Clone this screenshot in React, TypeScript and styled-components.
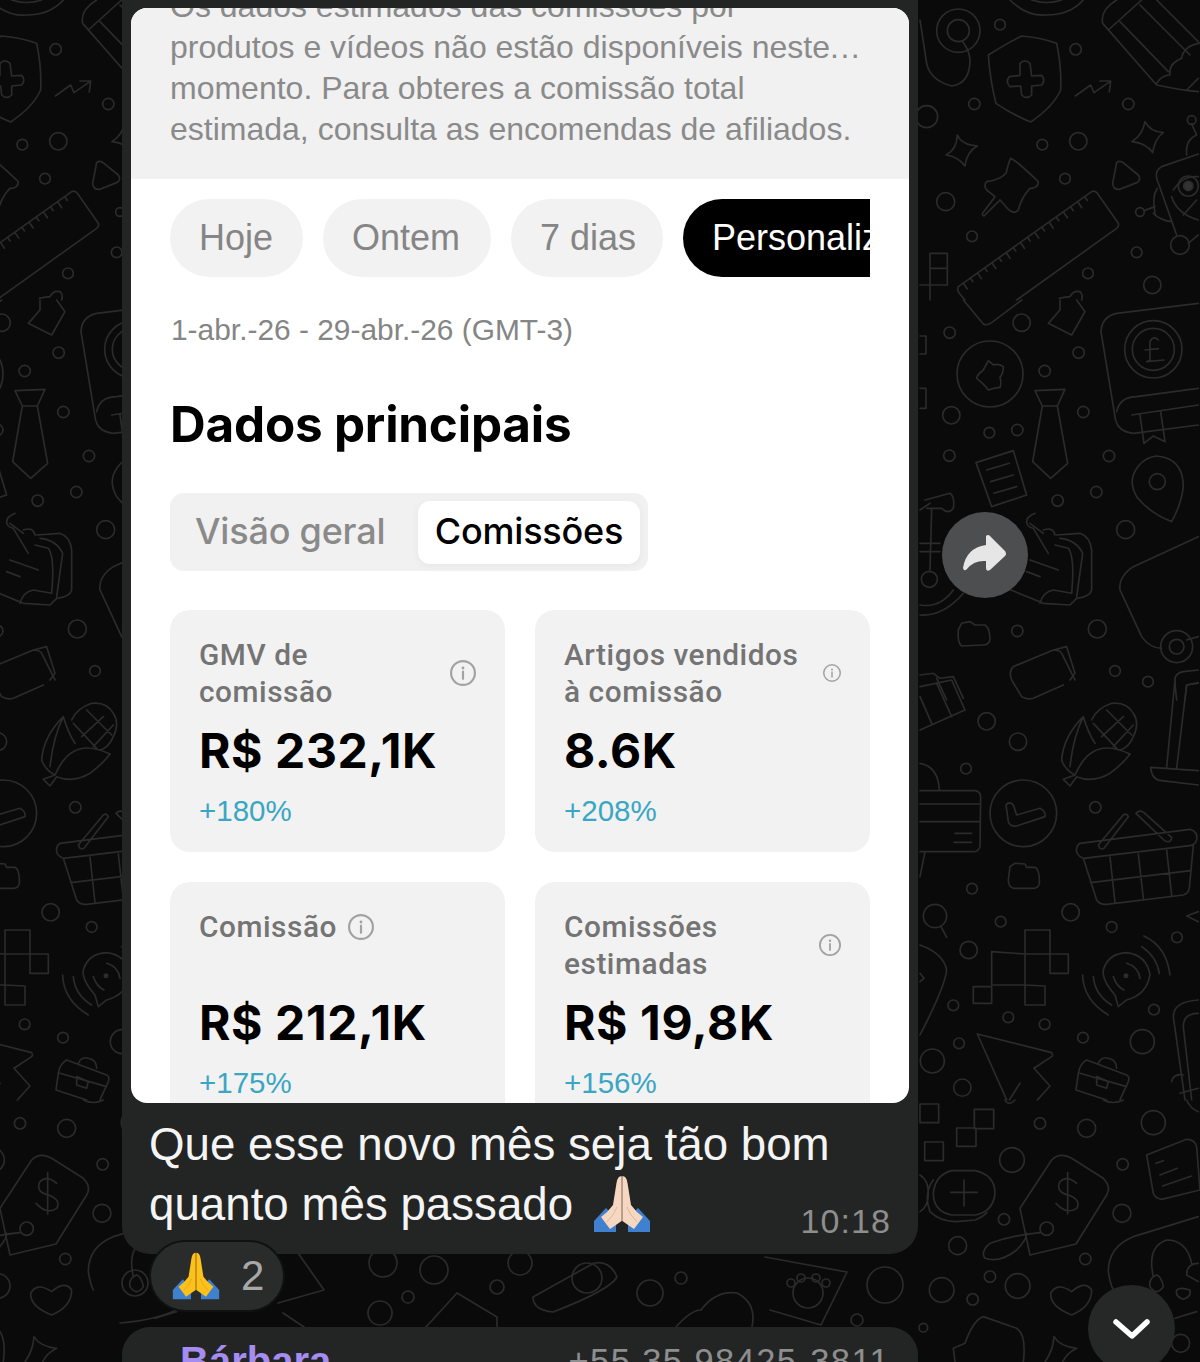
import React from "react";
import styled, { createGlobalStyle } from "styled-components";

const Global = createGlobalStyle`
  html, body { margin: 0; padding: 0; background: #0a0a0a; }
  * { box-sizing: border-box; }
`;

const Page = styled.div`
  position: relative;
  width: 1200px;
  height: 1362px;
  overflow: hidden;
  background: #0a0a0a;
  font-family: "Liberation Sans", Arial, sans-serif;
`;
const Wallpaper = styled.svg`
  position: absolute;
  inset: 0;
  width: 1200px;
  height: 1362px;
  fill: none;
  stroke: #2b2b2b;
  stroke-linecap: round;
  stroke-linejoin: round;
`;
const Thread = styled.div`
  position: relative;
  width: 796px;
  margin-left: 122px;
  display: flex;
  flex-direction: column;
`;
const Bubble = styled.div`
  background: #232525;
  border-radius: 0 0 28px 28px;
  padding: 8px 9px 0;
`;
const Shot = styled.div`
  height: 1095px;
  border-radius: 16px;
  overflow: hidden;
  background: #fff;
`;
const Notice = styled.div`
  height: 171px;
  overflow: hidden;
  background: #f1f1f1;
  padding: 0 39px;
  color: #8a8a8a;
  font-size: 32px;
  line-height: 41px;
`;
const NoticeText = styled.p`
  margin: -22px 0 0;
  white-space: nowrap;
`;
const Ellipsis = styled.span`
  letter-spacing: 1.5px;
`;
const Body = styled.div`
  padding: 20px 39px 0;
`;
const Chips = styled.div`
  display: flex;
  gap: 20px;
  overflow: hidden;
`;
const Chip = styled.div<{ $active?: boolean; $w: number }>`
  flex: 0 0 ${(p) => p.$w}px;
  height: 78px;
  padding-left: 29px;
  border-radius: ${(p) => (p.$active ? "39px 0 0 39px" : "39px")};
  background: ${(p) => (p.$active ? "#000" : "#f2f2f2")};
  color: ${(p) => (p.$active ? "#fff" : "#858585")};
  font-size: 36px;
  line-height: 78px;
  white-space: nowrap;
  overflow: hidden;
`;
const DateRange = styled.div`
  margin-top: 33px;
  color: #858585;
  font-size: 29.9px;
  line-height: 40px;
  padding-left: 1px;
`;
const Title = styled.h2`
  margin: 44px 0 0;
  color: #000;
  font-family: Inter, sans-serif;
  font-weight: 700;
  font-size: 49.4px;
  line-height: 60px;
  letter-spacing: -0.2px;
`;
const Segment = styled.div`
  margin-top: 39px;
  width: 478px;
  height: 78px;
  display: flex;
  align-items: center;
  justify-content: space-between;
  padding: 0 8px 0 25px;
  background: #f1f1f1;
  border-radius: 14px;
`;
const SegmentIdle = styled.span`
  color: #8a8a8a;
  font-family: Inter, sans-serif;
  font-weight: 500;
  font-size: 36px;
  line-height: 60px;
  letter-spacing: -0.2px;
  margin-top: -3px;
`;
const SegmentActive = styled.span`
  width: 222px;
  height: 63px;
  background: #fff;
  border-radius: 12px;
  box-shadow: 0 2px 8px rgba(0, 0, 0, 0.05);
  color: #000;
  font-family: Inter, sans-serif;
  font-weight: 500;
  font-size: 36px;
  letter-spacing: -0.2px;
  line-height: 60px;
  text-align: center;
`;
const Cards = styled.div`
  margin-top: 39px;
  display: grid;
  grid-template-columns: 335px 335px;
  gap: 30px 30px;
`;
const Card = styled.div`
  height: 242px;
  background: #f2f2f2;
  border-radius: 20px;
  padding: 27px 29px 0;
`;
const CardHead = styled.div<{ $inline?: boolean }>`
  height: 73px;
  display: flex;
  align-items: ${(p) => (p.$inline ? "flex-start" : "center")};
  justify-content: ${(p) => (p.$inline ? "flex-start" : "space-between")};
  gap: 11px;
`;
const CardLabel = styled.div`
  color: #747474;
  font-family: Roboto, sans-serif;
  font-weight: 500;
  font-size: 29.8px;
  line-height: 36.5px;
  letter-spacing: 0.55px;
`;
const InfoWrap = styled.svg<{ $inline?: boolean }>`
  flex: none;
  color: #a2a2a2;
  margin-top: ${(p) => (p.$inline ? "5px" : "-2px")};
`;
const CardValue = styled.div`
  margin-top: 16px;
  color: #000;
  font-family: Inter, sans-serif;
  font-weight: 700;
  font-size: 48px;
  line-height: 50px;
  letter-spacing: 0.6px;
`;
const CardDelta = styled.div`
  margin-top: 18px;
  color: #3ba6c4;
  font-family: "Liberation Sans", sans-serif;
  font-size: 29.5px;
  line-height: 34px;
`;
const Caption = styled.div`
  position: relative;
  padding: 12px 0 19px 18px;
  color: #f4f4f4;
  font-size: 45.7px;
  line-height: 60px;
`;
const Time = styled.span`
  position: absolute;
  right: 18px;
  bottom: 13px;
  color: #8e8e8e;
  font-size: 34px;
  line-height: 40px;
  letter-spacing: 1.1px;
`;
const EmojiSvg = styled.svg<{ $inline?: boolean }>`
  flex: none;
  vertical-align: 1px;
  margin: ${(p) => (p.$inline ? "-14px 0 -14px 20px" : "0")};
`;
const Reaction = styled.div`
  position: relative;
  margin: -14px 0 0 27px;
  width: 136px;
  height: 72px;
  display: flex;
  align-items: center;
  padding-left: 21px;
  gap: 21px;
  border: 2px solid #101111;
  border-radius: 36px;
  background: #2a2c2c;
  color: #a8a8a8;
  font-size: 42px;
`;
const NextBubble = styled.div`
  margin-top: 15px;
  height: 70px;
  background: #232525;
  border-radius: 28px 28px 0 0;
  display: flex;
  justify-content: space-between;
  padding: 12px 28px 0 58px;
`;
const Sender = styled.span`
  color: #a58cf0;
  font-weight: 700;
  font-size: 40px;
  line-height: 44px;
`;
const Phone = styled.span`
  color: #8e8e8e;
  font-size: 34.5px;
  line-height: 44px;
  letter-spacing: 1.4px;
`;
const RoundButton = styled.div<{ $bg: string; $top: number; $left: number; $size: number }>`
  position: absolute;
  top: ${(p) => p.$top}px;
  left: ${(p) => p.$left}px;
  width: ${(p) => p.$size}px;
  height: ${(p) => p.$size}px;
  border-radius: 50%;
  background: ${(p) => p.$bg};
`;

const Info = ({ size, inline }: { size: number; inline?: boolean }) => (
  <InfoWrap $inline={inline} width={size} height={size} viewBox="0 0 24 24" fill="none">
    <circle cx="12" cy="12" r="11" stroke="currentColor" strokeWidth="2" />
    <circle cx="12" cy="7.4" r="1.3" fill="currentColor" />
    <path d="M12 10.8V17.4" stroke="currentColor" strokeWidth="2" strokeLinecap="round" />
  </InfoWrap>
);

const PrayingHands = ({ skin, shade, size, inline }: { skin: string; shade: string; size: number; inline?: boolean }) => (
  <EmojiSvg $inline={inline} width={size} height={size} viewBox="0 0 58 58">
    <path d="M1 57 V46 L13 33 L23 43 V57Z" fill="#3f80cf" />
    <path d="M57 57 V46 L45 33 L35 43 V57Z" fill="#3f80cf" />
    <path d="M28.6 1 Q24.5 1 23.5 8 L20 30 Q15 37 8 42 L17 54 Q23 50 28.6 46Z" fill={skin} />
    <path d="M29.4 1 Q33.5 1 34.5 8 L38 30 Q43 37 50 42 L41 54 Q35 50 29.4 46Z" fill={skin} />
    <path d="M29 2 V46" stroke={shade} strokeWidth="1" />
    <path d="M24 32 Q21 40 14 47 M34 32 Q37 40 44 47" stroke={shade} strokeWidth="0.8" fill="none" />
  </EmojiSvg>
);

type Circ = [number, number, number];
const Circles = ({ list }: { list: Circ[] }) => (
  <>
    {list.map(([x, y, r], i) => (
      <circle key={i} cx={x} cy={y} r={r} />
    ))}
  </>
);

const rulerTicks = Array.from({ length: 18 }, (_, i) => {
  const x = 130 + i * 21.5;
  const y = 850 - i * 15.2;
  const l = i % 2 ? 12 : 20;
  return `M${x} ${y} L${x + l * 0.57} ${y + l * 0.82}`;
}).join(" ");

const Tile = () => (
  <>
    <g transform="translate(920 0) scale(0.3333)" strokeWidth="5">
      <Circles list={[[240,74,16],[467,148,17],[163,312,17],[625,312,17],[367,434,16],[475,424,26],[435,536,16],[77,605,27],[156,709,16],[650,757,16],[504,820,16],[697,855,26],[20,350,33],[815,360,13],[660,636,13],[780,735,28],[115,92,33],[115,92,65],[805,558,30]]} />
      <circle cx="805" cy="558" r="14" fill="#333" />
      <path d="M0 60 L20 190 Q30 240 95 258 Q150 250 150 180 Q148 150 128 125" />
      <path d="M205 165 Q260 130 305 108 Q360 112 410 130 Q425 200 422 270 Q400 320 332 366 Q270 340 228 310 Q210 240 205 165Z" />
      <path d="M300 190 Q315 175 330 190 L335 228 L365 226 Q378 240 365 255 L335 258 L335 285 Q320 300 305 285 L302 258 L270 260 Q255 245 268 230 L300 226Z" />
      <path d="M466 288 L512 255 L522 278 L570 245 M540 243 L572 243 L568 276" />
      <path d="M112 405 Q125 435 172 438 Q140 455 135 498 Q115 470 78 465 Q110 450 112 405Z" />
      <path d="M675 365 Q690 395 730 398 Q705 415 698 458 Q680 430 636 425 Q668 405 675 365Z" />
      <path d="M272 475 Q285 478 355 545 Q355 565 330 565 Q305 590 295 630 Q280 645 262 625 L240 600 L192 648 Q185 645 188 640 L225 590 L200 570 Q190 555 200 545 Q240 540 258 520 Q265 490 272 475Z" />
      <path d="M590 488 Q600 480 612 490 L655 525 Q665 540 650 548 L600 568 Q580 570 578 550Z" />
      <path d="M115 860 L515 575 Q525 570 532 580 L595 670 Q598 680 590 685 L290 900 M115 860 Q110 870 118 880 L135 900" />
      <path d={rulerTicks} />
      <path d="M590 0 Q540 30 548 70 L710 255 Q780 270 835 275 M565 90 L665 0 M600 65 L745 215 M660 15 L810 165 M710 0 L840 130 M710 250 Q725 225 750 225 Q745 190 785 175 Q790 140 835 130 M800 270 L835 235" />
      <path d="M835 462 L725 500 Q705 510 710 535 L770 705 M800 465 Q795 420 830 405 L815 372 M760 570 Q790 525 835 530 M755 590 Q770 640 835 660 M705 640 Q695 590 712 565 M700 640 Q720 660 755 665 M672 632 L705 620 M805 730 L835 705 M790 645 L830 600" />
      <path d="M30 900 L30 760 L82 760 L82 855 L0 855 M30 805 L82 805" />
      <path d="M418 895 Q440 890 450 890 Q460 870 480 875 Q490 885 485 900" />
      <path d="M270 0 Q320 50 380 45 Q450 45 490 0 M335 0 Q380 15 425 0" />
    </g>
    <g transform="translate(920 300) scale(0.3333)" strokeWidth="5">
      <Circles list={[[305,68,26],[89,98,17],[476,158,17],[374,213,17],[94,346,26],[490,336,17],[208,398,16],[292,390,17],[88,467,17],[567,468,17],[529,576,17],[413,602,17],[617,689,27],[292,993,17],[532,987,27],[585,1113,16],[684,1145,16],[210,222,99],[700,148,86],[700,148,63],[712,545,24],[28,838,24],[770,1040,48],[770,1040,22]]} />
      <path d="M130 0 L190 72 Q200 78 215 68 L305 0" />
      <path d="M470 0 L495 35 L455 105 L385 70 L420 30 L420 0" />
      <path d="M205 182 L220 195 Q235 190 250 200 Q250 220 240 232 Q245 250 240 262 Q225 262 205 270 Q195 255 170 235 Q170 225 190 210Z" />
      <path d="M0 108 L18 108 L18 162 L0 162 M0 265 L18 265 L18 325 L0 325" />
      <path d="M345 272 L435 268 L412 318 L367 318Z M367 318 L338 485 L392 535 L443 490 L412 318" />
      <path d="M168 488 L280 452 L320 585 L215 620Z M200 510 L268 490 M212 545 L280 525 M222 580 L290 560" />
      <path d="M835 10 L590 40 Q545 50 543 95 L585 350 Q590 395 640 400 L835 375 M590 335 Q600 290 650 290 L835 265 M635 345 L835 315 M660 345 L672 430 L700 408 L735 425 L722 335" />
      <path d="M715 120 Q700 105 690 125 L690 180 L680 185 L732 180 M675 150 L715 146" />
      <path d="M710 468 Q790 475 790 560 Q785 610 755 665 Q690 640 650 590 Q630 555 640 525 Q660 475 710 468Z" />
      <path d="M345 640 Q320 650 320 665 Q320 680 340 685 L385 760 M330 670 L370 700 M370 690 Q400 680 405 705 M410 705 L480 700 Q510 710 515 750 L515 870 Q510 890 470 895 L450 915 L370 910 L260 865 M420 715 Q470 720 488 760 L470 890 M360 910 Q370 875 400 870 L455 880 Q465 770 445 745 L405 735 M330 780 L415 810 M320 815 L360 830" />
      <path d="M15 600 L90 580 Q105 590 100 625 Q85 645 65 625 L20 625 M35 625 L30 810 M0 730 L60 730 M0 755 L60 755 M0 630 L30 610 M0 945 Q70 950 130 880 M0 915 Q60 925 100 870" />
      <path d="M835 710 L640 800 Q595 830 600 870 L665 1010 Q690 1045 725 1045 M835 1010 L800 1020" />
      <path d="M125 970 L150 965 L165 975 L195 975 Q210 985 210 1020 Q205 1035 190 1035 L125 1038 Q112 1030 115 990Z" />
      <path d="M280 1100 L400 1050 Q420 1050 425 1060 L465 1140 M400 1050 L440 1040 L465 1120 L450 1140 M280 1100 Q265 1115 275 1140 L305 1190 Q320 1200 340 1195 L430 1155" />
      <path d="M0 1125 L40 1120 L60 1135 L100 1130 L130 1195 M50 1135 L80 1200" />
      <path d="M835 1110 L790 1115 Q760 1120 765 1150 L770 1200 M835 1150 L800 1155 L795 1200" />
    </g>
    <g transform="translate(920 680) scale(0.3333)" strokeWidth="5">
      <Circles list={[[200,124,26],[294,185,26],[138,266,16],[526,382,17],[156,626,16],[452,697,26],[242,725,16],[575,741,16],[771,772,16],[146,810,26],[100,976,16],[702,989,16],[265,1012,16],[374,1033,16],[489,1073,16],[117,1090,16],[667,1085,36],[127,1223,26],[37,1143,36],[310,400,100],[45,708,35]]} />
      <path d="M0 20 L95 0 L135 90 L0 150 M50 10 L95 110 M0 50 L35 130" />
      <path d="M490 110 Q430 170 425 240 Q435 270 465 285 L430 298 L450 318 L470 290 Q520 310 570 280 Q610 250 630 222 Q560 190 520 215 Q490 230 465 285 M490 110 Q505 160 525 190 M490 110 Q460 170 450 260 M515 120 Q530 85 575 70 Q620 65 640 100 Q660 130 640 170 Q625 205 600 210 M520 130 L590 205 M560 90 L635 165 M545 170 L610 110 M580 200 L640 135" />
      <path d="M765 0 L740 262 M800 15 L770 265 M800 15 L835 8 M692 262 L835 272 M692 262 Q695 300 725 302 L835 315" />
      <path d="M0 332 L165 332 Q182 335 182 350 L180 500 Q175 515 160 515 L0 515 M0 372 L178 372 M0 425 L180 425 M105 460 L155 460 M102 487 L155 487 M0 250 Q55 260 58 330 M15 515 L0 590" />
      <path d="M258 375 Q268 362 280 375 L290 405 L360 385 Q378 395 375 410 L290 438 Q270 440 265 425Z" />
      <path d="M270 560 L285 550 L315 552 L320 562 L345 562 Q360 570 358 610 Q355 625 340 625 L280 625 Q265 620 265 600Z" />
      <path d="M480 490 L810 448 Q835 455 830 480 Q825 495 810 497 L490 535 Q465 525 470 505 Q472 495 480 490 M490 535 L530 660 Q540 675 560 673 L790 645 Q805 640 808 625 L820 497 M512 608 L812 572 M570 530 L585 668 M655 522 L670 655 M740 510 L755 645 M535 495 L610 405 Q620 398 625 410 L552 505 Q540 512 535 495Z M648 400 Q660 388 672 398 L755 472 Q755 490 735 483Z" />
      <path d="M62 738 L80 772" />
      <path d="M315 750 L390 750 L390 822 L445 822 L445 880 L390 880 L390 822 L315 822 L315 750 M315 822 L215 815 L215 915 L315 915 L315 822 M315 915 L375 918 L375 975 L315 975 L315 915 M160 920 L215 920 L215 970 L160 970Z" />
      <path d="M595 980 L585 945 Q545 900 550 870 Q565 820 620 818 Q680 825 690 885 Q680 945 620 960Z" />
      <path d="M488 885 Q490 960 565 1005 M520 890 Q525 945 575 975 M580 890 Q590 920 612 930 M672 768 Q740 800 750 885 M665 800 Q710 830 718 880 M620 850 Q655 860 660 895" />
      <circle cx="618" cy="887" r="5" fill="#333" />
      <path d="M172 1062 L395 1118 Q400 1125 395 1130 L342 1165 L390 1218 L352 1260 M300 1210 L268 1260 M172 1062 L260 1260" />
      <path d="M500 1140 L620 1185 Q630 1190 625 1205 L600 1260 M500 1140 Q480 1150 475 1180 L468 1230 L560 1260 M535 1150 Q545 1128 565 1135 Q590 1140 590 1165 M480 1180 L620 1220 M530 1190 L565 1205 L560 1225 L530 1215Z" />
      <path d="M0 795 Q70 820 80 870 Q75 920 0 1065 M0 880 L12 895 L0 905" />
      <path d="M835 960 Q760 965 760 1010 L795 1260 M835 1000 Q790 1000 790 1040 L815 1260 M755 1205 Q760 1180 790 1185 M780 1240 L835 1225 M835 695 L800 708 L835 725" />
    </g>
    <g transform="translate(920 1100) scale(0.3333)" strokeWidth="5">
      <Circles list={[[360,70,17],[500,85,27],[700,68,36],[608,193,17],[276,180,37],[606,340,27],[252,358,17],[113,437,27],[496,477,17],[210,530,17],[293,558,37],[65,570,37],[158,598,17],[10,683,13],[782,730,27],[380,386,20]]} />
      <path d="M0 12 H56 V68 H0Z M163 28 H221 V86 H163Z M110 84 H168 V139 H110Z M14 126 H70 V182 H14Z" />
      <path d="M95 212 L165 212 Q225 225 225 280 Q220 335 165 345 L95 345 Q40 335 40 280 Q45 225 95 212Z M40 240 Q10 280 30 335 Q60 365 110 365 L165 360 Q190 350 200 338 M92 277 L172 277 M132 240 L132 318 M0 225 Q25 240 25 280 Q25 320 0 335" />
      <path d="M300 325 L395 180 Q420 155 455 175 L550 235 Q575 260 560 285 L468 432 L330 465Z" />
      <path d="M470 250 Q440 225 420 245 Q405 275 445 285 Q485 300 470 325 Q440 345 408 310 M443 218 L443 342" />
      <path d="M360 398 Q280 405 210 430 Q180 455 195 475 Q240 490 290 450 Q320 420 320 400" />
      <path d="M680 165 L800 118 Q825 118 830 140 L840 270 L725 298 Q705 295 700 280Z M708 190 L730 182 M720 225 L772 205 M728 258 L815 228" />
      <path d="M835 350 L640 410 Q565 440 565 515 Q570 550 580 570 M700 530 Q680 440 740 420 Q800 420 815 490 M835 490 Q800 490 800 525 L835 545 M710 525 Q685 535 690 560 Q710 590 730 560 Q725 530 710 525 M770 570 Q780 560 810 570 Q815 590 790 598 Q765 590 770 570 M830 635 L765 655" />
      <path d="M455 645 Q390 620 392 580 Q410 545 455 575 Q495 540 515 570 Q515 620 455 645Z" />
      <path d="M402 710 Q420 740 470 745 Q440 760 428 786 M402 710 Q400 750 375 786" />
      <path d="M105 786 L100 745 L135 730 Q160 660 190 650 L290 685 Q320 705 310 786" />
      <path d="M255 0 Q265 20 285 0 M550 0 Q580 15 610 0 M800 0 Q810 25 835 35" />
    </g>
  </>
);

const Doodles = () => (
  <Wallpaper viewBox="0 0 1200 1362">
    <defs>
      <g id="tile">
        <Tile />
      </g>
    </defs>
    <use href="#tile" />
    <use href="#tile" x="-1020" />
    <g strokeWidth="1.7">
      <Circles list={[[383,1263,14],[434,1270,14],[520,1263,12],[681,1278,6],[380,1313,12],[497,1287,7],[408,1297,6],[650,1293,13],[885,1285,18],[135,1283,13],[857,1320,6],[587,1278,15],[808,1293,15],[791,1283,4],[801,1278,4],[816,1278,4],[826,1283,4]]} />
      <path d="M278 1303 L324 1290 L298 1253 M283 1313 L304 1327" />
      <path d="M533 1297 L594 1263 Q610 1260 617 1277 Q610 1290 553 1312 Q533 1310 533 1297Z" />
      <path d="M426 1327 L457 1293 L497 1317 L497 1327" />
      <path d="M676 1327 Q691 1310 701 1310 Q716 1290 737 1293 Q757 1303 752 1327" />
      <path d="M765 1257 L847 1272 L821 1325 L770 1310" />
      <path d="M120 1323 Q156 1320 176 1310" />
    </g>
  </Wallpaper>
);

const metrics = [
  { label: ["GMV de", "comissão"], value: "R$ 232,1K", delta: "+180%", icon: 26 },
  { label: ["Artigos vendidos", "à comissão"], value: "8.6K", delta: "+208%", icon: 18 },
  { label: ["Comissão"], value: "R$ 212,1K", delta: "+175%", icon: 26, inline: true },
  { label: ["Comissões", "estimadas"], value: "R$ 19,8K", delta: "+156%", icon: 22 },
];

export default function App() {
  return (
    <Page>
      <Global />
      <Doodles />
      <Thread>
        <Bubble>
          <Shot>
            <Notice>
              <NoticeText>
                Os dados estimados das comissões por
                <br />
                produtos e vídeos não estão disponíveis neste<Ellipsis>...</Ellipsis>
                <br />
                momento. Para obteres a comissão total
                <br />
                estimada, consulta as encomendas de afiliados.
              </NoticeText>
            </Notice>
            <Body>
              <Chips>
                <Chip $w={133}>Hoje</Chip>
                <Chip $w={168}>Ontem</Chip>
                <Chip $w={152}>7 dias</Chip>
                <Chip $w={187} $active>
                  Personalizar
                </Chip>
              </Chips>
              <DateRange>1-abr.-26 - 29-abr.-26 (GMT-3)</DateRange>
              <Title>Dados principais</Title>
              <Segment>
                <SegmentIdle>Visão geral</SegmentIdle>
                <SegmentActive>Comissões</SegmentActive>
              </Segment>
              <Cards>
                {metrics.map((m) => (
                  <Card key={m.value}>
                    <CardHead $inline={m.inline}>
                      <CardLabel>
                        {m.label.map((l) => (
                          <div key={l}>{l}</div>
                        ))}
                      </CardLabel>
                      <Info size={m.icon} inline={m.inline} />
                    </CardHead>
                    <CardValue>{m.value}</CardValue>
                    <CardDelta>{m.delta}</CardDelta>
                  </Card>
                ))}
              </Cards>
            </Body>
          </Shot>
          <Caption>
            Que esse novo mês seja tão bom
            <br />
            quanto mês passado
            <PrayingHands skin="#f6d8c2" shade="#d4ae96" size={58} inline />
            <Time>10:18</Time>
          </Caption>
        </Bubble>
        <Reaction>
          <PrayingHands skin="#fcc21b" shade="#e09a10" size={48} />
          <span>2</span>
        </Reaction>
        <NextBubble>
          <Sender>Bárbara</Sender>
          <Phone>+55 35 98425-3811</Phone>
        </NextBubble>
      </Thread>
      <RoundButton $bg="#4d4e50" $top={512} $left={942} $size={86}>
        <svg width="86" height="86" viewBox="0 0 86 86">
          <path
            d="M44 24 Q46 22 48 24 L63 39 Q65 42 63 44 L48 58 Q44 60 44 56 L44 49 Q32 48 25 57 Q22 60 21 56 Q24 36 44 33Z"
            fill="#e6e6e6"
          />
        </svg>
      </RoundButton>
      <RoundButton $bg="#262828" $top={1285} $left={1088} $size={87}>
        <svg width="87" height="87" viewBox="0 0 87 87" fill="none">
          <path d="M28 37 L44 51 L59 37" stroke="#fff" strokeWidth="5.5" strokeLinecap="round" strokeLinejoin="round" />
        </svg>
      </RoundButton>
    </Page>
  );
}
